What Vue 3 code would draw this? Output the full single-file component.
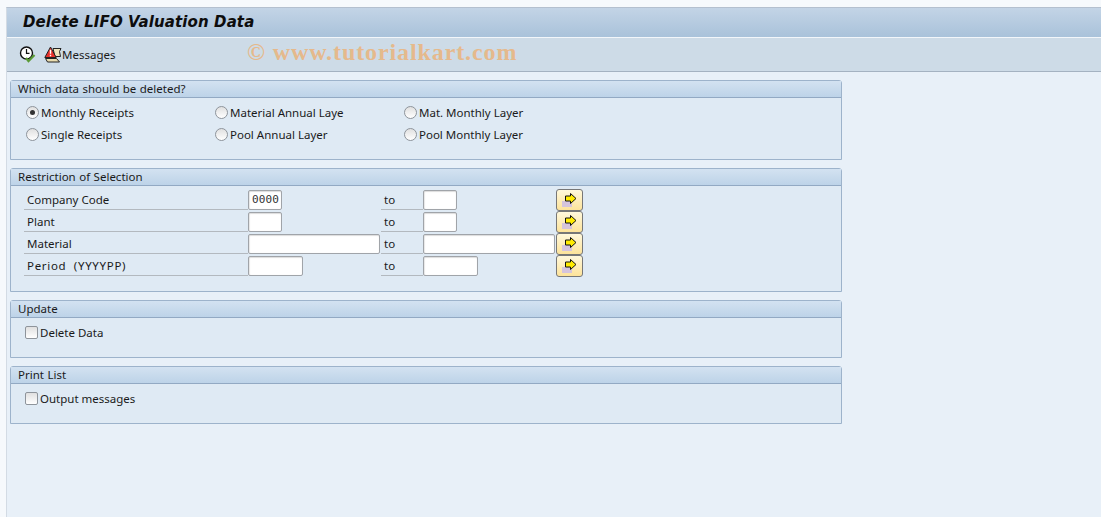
<script setup>
const radios = [
  { label: 'Monthly Receipts', on: true },
  { label: 'Material Annual Laye' },
  { label: 'Mat. Monthly Layer' },
  { label: 'Single Receipts' },
  { label: 'Pool Annual Layer' },
  { label: 'Pool Monthly Layer' },
]
const rows = [
  { label: 'Company Code', size: 's', value: '0000' },
  { label: 'Plant', size: 's', value: '' },
  { label: 'Material', size: 'l', value: '' },
  { label: 'Period  (YYYYPP)', size: 'm', value: '', wide: true },
]
</script>

<template>
  <div class="page">
    <div class="main">
      <header class="title"><h1>Delete LIFO Valuation Data</h1></header>
      <div class="toolbar">
        <svg class="ico" width="18" height="18" viewBox="0 0 18 18">
          <circle cx="7.500" cy="7" r="6" fill="#fff" stroke="#111" stroke-width="1.400" />
          <path d="M7.500 3V7.300H10.500" fill="none" stroke="#111" stroke-width="1.200" />
          <path d="M7 12l2.500 3 6-6" fill="none" stroke="#5a9a35" stroke-width="2.200" />
        </svg>
        <svg class="ico warn" width="18" height="18" viewBox="0 0 18 18">
          <path d="M9 2.500h8l-1.500 3 1 5H11z" fill="#efe4bd" stroke="#222" stroke-width="1" />
          <path d="M1.500 12.500h11l3 3.500H3.500z" fill="#e9dcae" stroke="#222" stroke-width="1" />
          <path d="M0.800 11.500L6.500 1l5.700 10.500z" fill="#e8302a" stroke="#222" stroke-width="1" />
          <path d="M6.500 3.800v4M6.500 8.800v1.400" stroke="#fff" stroke-width="1.400" />
        </svg>
        <span class="msg">Messages</span>
      </div>
      <div class="content">
        <section class="panel p1">
          <h2>Which data should be deleted?</h2>
          <div class="radios">
            <label v-for="r in radios" :key="r.label" class="radio">
              <span class="dot" :class="{ on: r.on }"></span>{{ r.label }}
            </label>
          </div>
        </section>
        <section class="panel p2">
          <h2>Restriction of Selection</h2>
          <div class="rows">
            <div v-for="r in rows" :key="r.label" class="row">
              <span class="lbl" :class="{ wide: r.wide }">{{ r.label }}</span>
              <div class="cell"><span class="inp" :class="r.size">{{ r.value }}</span></div>
              <span class="to">to</span>
              <div class="cell"><span class="inp" :class="r.size"></span></div>
              <button class="more" type="button">
                <svg width="18" height="18" viewBox="0 0 18 18">
                  <rect x="1" y="10" width="10" height="6" fill="#d5c4dc" />
                  <path d="M4.500 5H9.500V2.500L15 7.500 9.500 12.500V10H4.500z" fill="#ffeb00" stroke="#111" stroke-width="1" />
                </svg>
              </button>
            </div>
          </div>
        </section>
        <section class="panel p3">
          <h2>Update</h2>
          <label class="check"><span class="box"></span>Delete Data</label>
        </section>
        <section class="panel p3">
          <h2>Print List</h2>
          <label class="check"><span class="box"></span>Output messages</label>
        </section>
      </div>
      <div class="mark">© www.tutorialkart.com</div>
    </div>
  </div>
</template>

<style>
html, body { margin: 0; background: #f6f9fc; }
</style>

<style scoped>
.page {
  width: 1101px;
  height: 517px;
  overflow: hidden;
  box-sizing: border-box;
  padding: 7px 0 0 6px;
  font-family: "Noto Sans", "Open Sans", sans-serif;
  font-size: 11.5px;
  color: #1a1a1a;
}
.main {
  position: relative;
  height: 510px;
  border-left: 1px solid #d3dbe4;
  border-top: 1px solid #b4c0cf;
  background: #e8f0f8;
}
.title {
  height: 30px;
  box-sizing: border-box;
  padding: 0 0 2px 16px;
  display: flex;
  align-items: center;
  background: linear-gradient(#c3d4e6, #a9c2da);
  border-bottom: 1px solid #f2f6fa;
}
h1 {
  margin: 0;
  font-family: "DejaVu Sans", sans-serif;
  font-size: 15px;
  font-style: italic;
  font-weight: 700;
  color: #0d0d0d;
  letter-spacing: 0.1px;
}
.toolbar {
  height: 34px;
  box-sizing: border-box;
  display: flex;
  align-items: center;
  padding-left: 12px;
  background: #cddbe7;
  border-bottom: 1px solid #a4b2c1;
}
.warn { margin-left: 7px; }
.msg { margin-left: 0; }
.content {
  padding: 8px 0 0 3px;
  width: 832px;
  display: flex;
  flex-direction: column;
  gap: 8px;
}
.panel {
  box-sizing: border-box;
  border: 1px solid #9db3cb;
  border-radius: 3px 3px 0 0;
  background: #dfeaf4;
}
.p1 { height: 80px; }
.p2 { height: 124px; }
.p3 { height: 58px; }
h2 {
  margin: 0;
  height: 17px;
  line-height: 15px;
  box-sizing: border-box;
  padding-left: 7px;
  font-size: 11.5px;
  font-weight: 400;
  word-spacing: 0.5px;
  background: linear-gradient(#d3e2f1, #bdd3e8);
  border-bottom: 1px solid #92a9c3;
}
.radios {
  display: grid;
  grid-template-columns: repeat(3, 189px);
  grid-auto-rows: 22px;
  padding: 3px 0 0 15px;
}
.radio { display: flex; align-items: center; }
.dot {
  box-sizing: border-box;
  width: 13px;
  height: 13px;
  margin-right: 2px;
  border: 1px solid #8e949b;
  border-radius: 50%;
  background: linear-gradient(#e0e0e0, #fff);
  display: flex;
  align-items: center;
  justify-content: center;
}
.dot.on::after {
  content: "";
  width: 5px;
  height: 5px;
  border-radius: 50%;
  background: #333;
}
.rows { padding: 4px 0 0 13px; }
.row {
  display: grid;
  grid-template-columns: 224px 133px 42px 133px 27px;
  height: 22px;
}
.lbl, .to {
  box-sizing: border-box;
  height: 20px;
  line-height: 20px;
  border-bottom: 1px solid #b3b9bf;
  white-space: pre;
}
.lbl { padding-left: 3px; }
.lbl.wide { letter-spacing: 0.7px; }
.to { padding-left: 3px; }
.inp {
  display: block;
  box-sizing: border-box;
  height: 20px;
  line-height: 18px;
  padding-left: 3px;
  background: #fff;
  border: 1px solid #a0a4a9;
  border-radius: 2px;
  box-shadow: inset 0 1px 1px #dcdcdc, inset 1px 0 1px #e8e8e8;
  font-family: "DejaVu Sans Mono", monospace;
  font-size: 11px;
  letter-spacing: 0.1px;
  color: #333;
}
.inp.s { width: 34px; }
.inp.m { width: 55px; }
.inp.l { width: 132px; }
.more {
  box-sizing: border-box;
  width: 27px;
  height: 22px;
  margin-top: -1px;
  padding: 0 0 0 1px;
  display: flex;
  align-items: center;
  justify-content: center;
  border: 1px solid #777;
  border-radius: 3px;
  background: linear-gradient(#fff8dc, #fde39a);
}
.check {
  display: flex;
  align-items: center;
  height: 22px;
  margin: 3px 0 0 14px;
}
.box {
  box-sizing: border-box;
  width: 13px;
  height: 13px;
  margin-right: 2px;
  border: 1px solid #8e949b;
  border-radius: 2px;
  background: linear-gradient(#e0e0e0, #fff);
}
.mark {
  position: absolute;
  left: 240px;
  top: 30px;
  font-family: "Liberation Serif", serif;
  font-size: 24px;
  font-weight: 700;
  letter-spacing: 0.9px;
  color: #e5b98c;
  line-height: 28px;
  pointer-events: none;
}
</style>
